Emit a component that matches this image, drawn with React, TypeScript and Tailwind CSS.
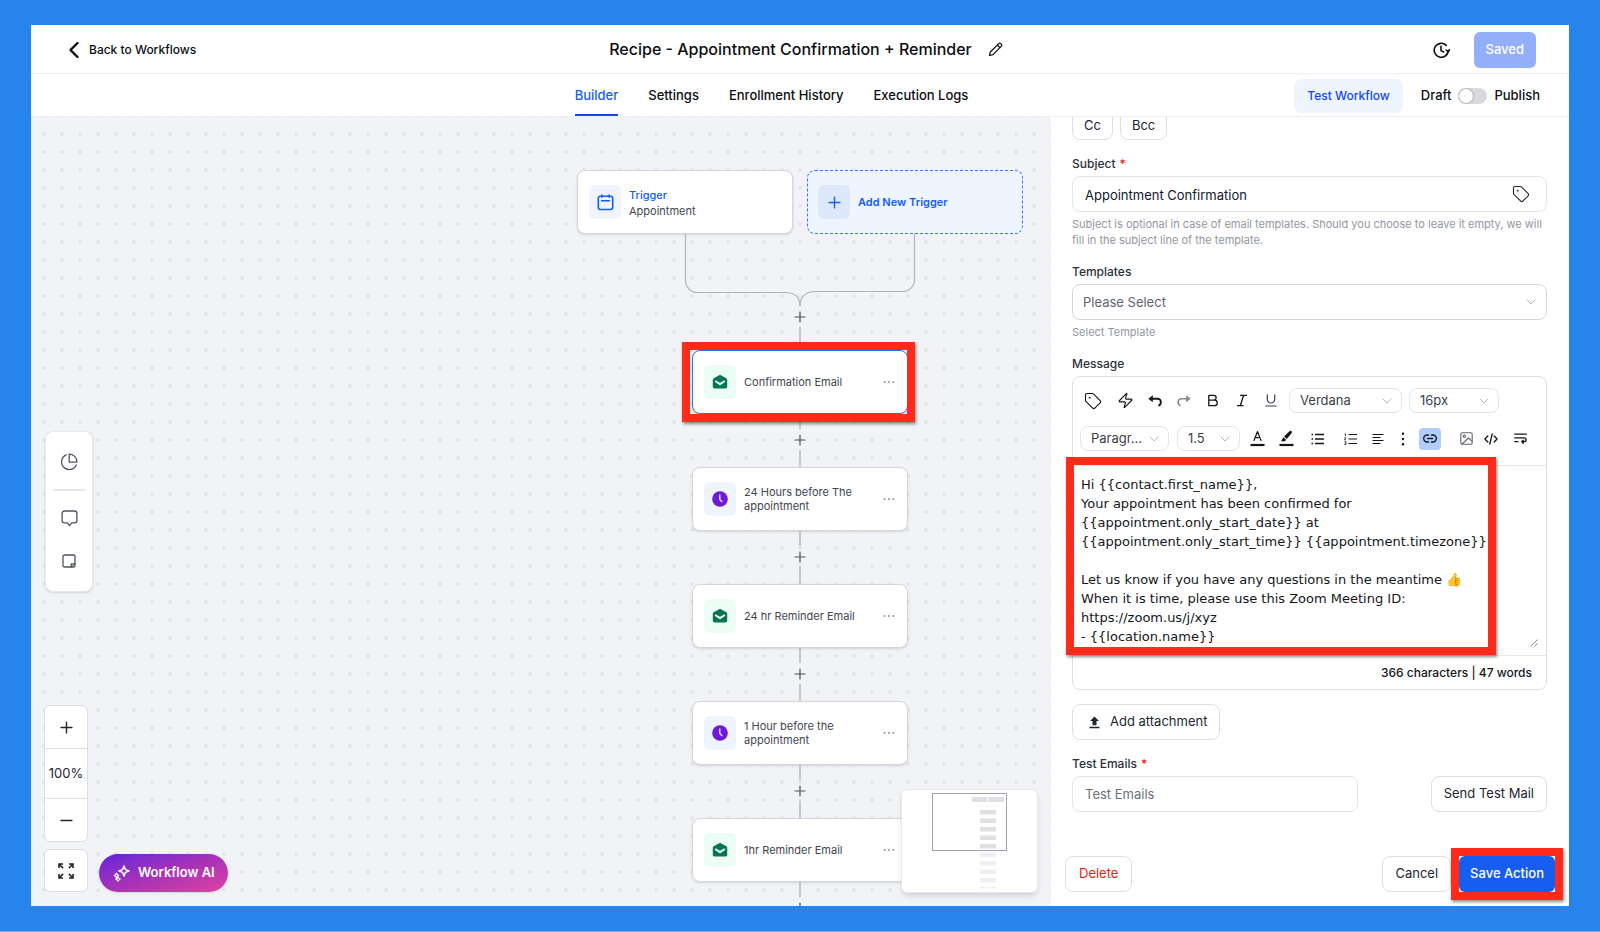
import type { ReactNode } from "react";
import { ChevronDown, Tag, Zap } from "lucide-react";

const stroke = {
  fill: "none",
  stroke: "currentColor",
  strokeLinecap: "round" as const,
  strokeLinejoin: "round" as const,
};

function BackIcon() {
  return (
    <svg width="12" height="18" viewBox="0 0 12 18" {...stroke} strokeWidth="2.4">
      <path d="M9.5 2 2.5 9l7 7" />
    </svg>
  );
}

function PencilIcon() {
  return (
    <svg width="15" height="15" viewBox="0 0 15 15" {...stroke} strokeWidth="1.2">
      <path d="M1.5 13.5 2.3 10 10.8 1.6a1.3 1.3 0 0 1 1.8 0l.8.8a1.3 1.3 0 0 1 0 1.8L5 12.7Z" />
      <path d="m9.4 3 2.6 2.6" />
    </svg>
  );
}

function HistoryIcon() {
  return (
    <svg width="17" height="17" viewBox="0 0 17 17" {...stroke} strokeWidth="1.6">
      <path d="M15.2 8.6a7 7 0 1 1-2-5.2M13.6 12.8a7 7 0 0 0 1-1.6" />
      <path d="M8 4.2v4.4l2.6 1.4" />
      <path d="m13.2 8 2 1.6L16.5 7.7" />
    </svg>
  );
}

function CalendarIcon() {
  return (
    <svg width="17" height="17" viewBox="0 0 17 17" {...stroke} strokeWidth="1.6">
      <rect x="1.3" y="2.3" width="14.4" height="13.2" rx="2.2" />
      <path d="M4.8 1v2.2M12.2 1v2.2M4.5 6.8h8" />
    </svg>
  );
}

function PlusIcon({ size = 12, width = 1.2 }: { size?: number; width?: number }) {
  return (
    <svg width={size} height={size} viewBox="0 0 12 12" {...stroke} strokeWidth={width}>
      <path d="M6 1v10M1 6h10" />
    </svg>
  );
}

function MailIcon() {
  return (
    <svg width="16" height="16" viewBox="0 0 16 16">
      <path d="M8 .8 14.3 4.2c.5.3.9.9.9 1.5v7.1c0 1-.8 1.7-1.7 1.7h-11c-.9 0-1.7-.7-1.7-1.7V5.7c0-.6.4-1.2.9-1.5Z" fill="#067553" />
      <path d="M3.2 7 8 10.2 12.8 7" fill="none" stroke="#ecfdf5" strokeWidth="2" strokeLinejoin="round" />
    </svg>
  );
}

function ClockIcon() {
  return (
    <svg width="16" height="16" viewBox="0 0 16 16">
      <circle cx="8" cy="8" r="7.8" fill="#6d1bd4" />
      <path d="M7.8 4v4.4l2 2" fill="none" stroke="#e9ddfb" strokeWidth="1.4" strokeLinecap="round" />
    </svg>
  );
}

function PieIcon() {
  return (
    <svg width="18" height="18" viewBox="0 0 18 18" {...stroke} strokeWidth="1.3">
      <path d="M6.2 1.8A7.7 7.7 0 1 0 16.3 12" />
      <path d="M9.2 1.1a7.7 7.7 0 0 1 7.7 7.7v.3H9.2Z" />
    </svg>
  );
}

function CommentIcon() {
  return (
    <svg width="17" height="17" viewBox="0 0 17 17" {...stroke} strokeWidth="1.3">
      <path d="M3.4 1h10.2a2.3 2.3 0 0 1 2.3 2.3v7.3a2.3 2.3 0 0 1-2.3 2.3h-2.8L8.5 15.6l-2.300-2.700H3.400a2.300 2.300 0 0 1-2.300-2.300V3.300A2.300 2.300 0 0 1 3.400 1Z" />
    </svg>
  );
}

function NoteIcon() {
  return (
    <svg width="14" height="14" viewBox="0 0 14 14" {...stroke} strokeWidth="1.3">
      <path d="M2.6 1h8.8A1.6 1.6 0 0 1 13 2.600v8.800A1.600 1.600 0 0 1 11.400 13H2.600A1.600 1.600 0 0 1 1 11.400V2.600A1.600 1.600 0 0 1 2.600 1Z" />
      <path d="M9.200 13V9.800H13" />
      <path d="m9.600 12.600 3-2.600" strokeWidth="1" />
    </svg>
  );
}

function FitIcon() {
  return (
    <svg width="16" height="16" viewBox="0 0 16 16" fill="none" stroke="currentColor" strokeWidth="1.6">
      <path d="M1 5V1h4M1.2 1.2l3.900 3.900M11 1h4v4M14.800 1.200l-3.900 3.900M1 11v4h4M1.200 14.800l3.900-3.900M15 11v4h-4M14.800 14.800l-3.900-3.900" />
    </svg>
  );
}

function SparkIcon() {
  return (
    <svg width="17" height="17" viewBox="0 0 17 17" fill="none" stroke="currentColor" strokeWidth="1.5" strokeLinejoin="round">
      <path d="m11 1 1.400 3.600L16 6l-3.600 1.400L11 11 9.600 7.400 6 6l3.600-1.400Z" />
      <path d="m3.400 8.200 1 1.400 1.300.8-1.300.8-1 1.400-.8-1.400-1.300-.8 1.300-.8Z" strokeWidth="1.200" />
      <path d="m5 12 .8 1.200 1.400.9-1.400.9L5 16.200 4.200 15l-1.400-.9 1.400-.9Z" strokeWidth="1.200" />
    </svg>
  );
}

function UndoIcon() {
  return (
    <svg width="14" height="12" viewBox="0 0 14 12" fill="none" stroke="currentColor" strokeWidth="1.9">
      <path d="M2.500 3.800h7a3.400 3.400 0 0 1 3.400 3.400c0 1.500-.8 2.800-2.400 3.600" />
      <path d="M4.800.3v7L.3 3.800Z" fill="currentColor" stroke="none" />
    </svg>
  );
}

function RedoIcon() {
  return (
    <svg width="14" height="12" viewBox="0 0 14 12" fill="none" stroke="currentColor" strokeWidth="1.600">
      <path d="M11.500 3.800h-7a3.400 3.400 0 0 0-3.400 3.400c0 1.500.8 2.800 2.400 3.600" />
      <path d="M9.200.3v7l4.500-3.500Z" fill="currentColor" stroke="none" />
    </svg>
  );
}

function BoldIcon() {
  return (
    <svg width="12" height="13" viewBox="0 0 12 13" {...stroke} strokeWidth="1.300">
      <path d="M1.800 1.300h4.900a2.400 2.400 0 0 1 0 4.900H1.800ZM1.800 6.200h5.700a2.700 2.700 0 0 1 0 5.500H1.800Z" />
    </svg>
  );
}

function ItalicIcon() {
  return (
    <svg width="12" height="13" viewBox="0 0 12 13" {...stroke} strokeWidth="1.300">
      <path d="M4.500 1.300h6M1.500 11.700h5.500M7.600 1.300l-3.300 10.400" />
    </svg>
  );
}

function UnderlineIcon() {
  return (
    <svg width="12" height="13" viewBox="0 0 12 13" {...stroke} strokeWidth="1.200">
      <path d="M2.300.8v4.500a3.700 3.700 0 0 0 7.400 0V.8M.8 12h10.400" />
    </svg>
  );
}

function TextColorIcon() {
  return (
    <svg width="15" height="17" viewBox="0 0 15 17" {...stroke} strokeWidth="1.200">
      <path d="M4 10.500 7.500 1.500l3.500 9M5.200 7.600h4.600" />
      <path d="M.5 15h14" strokeWidth="2.200" strokeLinecap="butt" />
    </svg>
  );
}

function MarkerIcon() {
  return (
    <svg width="15" height="17" viewBox="0 0 15 17">
      <path d="M5 6.500 10.500 1.300c.6-.6 1.400-.6 2 0s.6 1.400 0 2L7.800 9Z" fill="currentColor" />
      <path d="m4.400 7.200 2.800 2.700-1.500 1.300H2Z" fill="currentColor" />
      <path d="M.5 15h14" stroke="currentColor" strokeWidth="2.200" />
    </svg>
  );
}

function BulletsIcon() {
  return (
    <svg width="13" height="12" viewBox="0 0 13 12" stroke="currentColor" strokeWidth="1.300">
      <path d="M4 1.500h9M4 6h9M4 10.500h9" />
      <path d="M.5 1.500h1.600M.5 6h1.600M.5 10.500h1.600" strokeWidth="1.700" />
    </svg>
  );
}

function NumbersIcon() {
  return (
    <svg width="13" height="12" viewBox="0 0 13 12" fill="none" stroke="currentColor" strokeWidth="1.200">
      <path d="M4.500 1.500H13M4.500 6H13M4.500 10.500H13" />
      <path d="M.6.900h.9v2.300M.4 4.700h1.400L.5 6.800h1.500M.4 8.700h1.500v2.800H.4M.8 10.100h1" strokeWidth=".8" />
    </svg>
  );
}

function AlignIcon() {
  return (
    <svg width="12" height="12" viewBox="0 0 12 12" stroke="currentColor" strokeWidth="1">
      <path d="M.5 1.500h11M.5 4.500h8M.5 7.500h11M.5 10.500h8" />
    </svg>
  );
}

function KebabIcon() {
  return (
    <svg width="4" height="14" viewBox="0 0 4 14" fill="currentColor">
      <circle cx="2" cy="1.700" r="1.200" />
      <circle cx="2" cy="7" r="1.200" />
      <circle cx="2" cy="12.300" r="1.200" />
    </svg>
  );
}

function LinkIcon() {
  return (
    <svg width="14" height="9" viewBox="0 0 14 9" {...stroke} strokeWidth="1.400">
      <path d="M5.500 1H4.200a3.500 3.500 0 0 0 0 7h1.300M8.500 1h1.300a3.500 3.500 0 0 1 0 7H8.500M4.500 4.500h5" />
    </svg>
  );
}

function ImageIcon() {
  return (
    <svg width="13" height="13" viewBox="0 0 13 13" {...stroke} strokeWidth="1.100">
      <rect x=".8" y=".8" width="11.400" height="11.400" rx="1.500" />
      <circle cx="4.300" cy="4.300" r="1.200" />
      <path d="m2 12 6.500-6 3.500 3.200" />
    </svg>
  );
}

function CodeIcon() {
  return (
    <svg width="14" height="12" viewBox="0 0 14 12" {...stroke} strokeWidth="1.300">
      <path d="M3.800 3 .9 6l2.900 3M10.200 3l2.900 3-2.900 3M8.200 1 5.800 11" />
    </svg>
  );
}

function WrapIcon() {
  return (
    <svg width="13" height="11" viewBox="0 0 13 11" {...stroke} strokeWidth="1.300">
      <path d="M.8 1.200h11.400M.8 4.900h9.400a1.900 1.900 0 0 1 0 3.800H8M.8 8.700H4M9.300 7.200 7.700 8.700l1.600 1.500" />
    </svg>
  );
}

function UploadIcon() {
  return (
    <svg width="11" height="13" viewBox="0 0 11 13" fill="currentColor">
      <path d="M5.500.5 10 5H7.500v4.300h-4V5H1ZM.5 10.800h10v1.500H.5Z" />
    </svg>
  );
}

function Highlight({ className }: { className: string }) {
  return (
    <div
      aria-hidden="true"
      className={`pointer-events-none absolute border-8 border-[#ff2a1a] shadow-[1px_2px_3px_rgba(0,0,0,0.45)] ${className}`}
    />
  );
}

type StepProps = { title: string; kind: "mail" | "wait"; active?: boolean };

function StepCard({ title, kind, active }: StepProps) {
  return (
    <div
      className={`relative flex h-16 w-[216px] items-center rounded-lg border bg-white pr-3 pl-[11px] shadow-sm ${
        active ? "border-[#2f6fe0]" : "border-[#d5d7dc]"
      }`}
    >
      <span className={`flex h-[34px] w-8 shrink-0 items-center justify-center rounded-md ${kind === "mail" ? "bg-[#ecfdf5]" : "bg-[#eff4ff]"}`}>
        {kind === "mail" ? <MailIcon /> : <ClockIcon />}
      </span>
      <span className="ml-2 w-[120px] text-[11px] leading-[14px] text-[#414651]">{title}</span>
      <button aria-label={`Options for ${title}`} className="ml-auto text-[#8d929c]">
        <svg width="12" height="4" viewBox="0 0 12 4" fill="currentColor">
          <circle cx="1.600" cy="2" r="1" />
          <circle cx="6" cy="2" r="1" />
          <circle cx="10.400" cy="2" r="1" />
        </svg>
      </button>
      {active && <Highlight className="-top-[9px] -right-2 -bottom-[9px] -left-[11px]" />}
    </div>
  );
}

function AddStep() {
  return (
    <button aria-label="Add step" className="flex h-[21px] w-6 items-center justify-center text-[#4b505a]">
      <PlusIcon />
    </button>
  );
}

const steps: StepProps[] = [
  { title: "Confirmation Email", kind: "mail", active: true },
  { title: "24 Hours before The appointment", kind: "wait" },
  { title: "24 hr Reminder Email", kind: "mail" },
  { title: "1 Hour before the appointment", kind: "wait" },
  { title: "1hr Reminder Email", kind: "mail" },
];

function Minimap() {
  return (
    <div className="absolute right-[13px] bottom-[13px] rounded-md border border-[#e7e8eb] bg-white shadow-md">
      <svg width="135" height="102" viewBox="0 0 135 102">
        <rect x="70" y="7" width="15" height="5" fill="#dfe0e4" />
        <rect x="86" y="7" width="16" height="5" fill="#dfe0e4" />
        {Array.from({ length: 9 }, (_, i) => (
          <rect key={i} x="78" y={20 + i * 8.5} width="16" height="4.500" fill={i < 5 ? "#dfe0e4" : "#efeff1"} />
        ))}
        <rect x="78" y="97" width="16" height="1.500" fill="#efeff1" />
        <rect x="30.500" y="3.500" width="74" height="57" fill="none" stroke="#9ca1ab" />
      </svg>
    </div>
  );
}

function Canvas() {
  return (
    <main className="relative min-w-0 flex-1 overflow-hidden bg-[#f2f3f7] bg-[radial-gradient(circle,#e5e6e8_1.5px,transparent_2px)] bg-[size:18px_18px] bg-[position:4px_8px]">
      <div className="absolute top-[53px] left-[546px] flex w-[446px] flex-col items-center">
        <div className="flex w-full justify-between">
          <div className="flex h-16 w-[216px] items-center gap-2 rounded-lg border border-[#d5d7dc] bg-white pl-[11px] shadow-sm">
            <span className="flex h-[34px] w-8 items-center justify-center rounded-md bg-[#eff4ff] text-[#155eef]">
              <CalendarIcon />
            </span>
            <span className="flex flex-col pt-px text-[11px] leading-4">
              <span className="font-medium text-[#155eef]">Trigger</span>
              <span className="text-[#414651]">Appointment</span>
            </span>
          </div>
          <button className="flex h-16 w-[216px] items-center gap-2 rounded-lg border border-dashed border-[#2f7bea] bg-[#eff5ff] pl-[10px] text-[#155eef]">
            <span className="flex h-[34px] w-8 items-center justify-center rounded-md bg-[#dde8fa]">
              <PlusIcon size={13} width={1.3} />
            </span>
            <span className="text-[11px] leading-4 font-semibold">Add New Trigger</span>
          </button>
        </div>
        <svg width="446" height="72" viewBox="0 0 446 72" fill="none" stroke="#b0b3b9" strokeWidth="1.200">
          <path d="M108.500 0v46a12 12 0 0 0 12 12.500H208c10 0 15 5 15 13.500" />
          <path d="M337.500 0v45a12 12 0 0 1-12 12.500H238c-10 0-15 6-15 14.500" />
        </svg>
        <AddStep />
        <span className="h-[23px] w-[2px] bg-[#c6c8cc]" />
        {steps.map((step) => (
          <div key={step.title} className="flex flex-col items-center">
            <StepCard {...step} />
            <span className="h-[15px] w-[2px] bg-[#c6c8cc]" />
            <AddStep />
            <span className="h-[17px] w-[2px] bg-[#c6c8cc]" />
          </div>
        ))}
      </div>

      <div className="absolute bottom-[314px] left-[14px] flex h-[161px] w-12 flex-col items-center rounded-lg border border-[#e7e8eb] bg-white pt-[21px] text-[#4e535e] shadow-sm">
        <button aria-label="Statistics"><PieIcon /></button>
        <span className="mt-[18px] h-[2px] w-8 bg-[#e4e5e9]" />
        <button aria-label="Comments" className="mt-[19px]"><CommentIcon /></button>
        <button aria-label="Notes" className="mt-[27px]"><NoteIcon /></button>
      </div>

      <div className="absolute bottom-[14px] left-[13px] flex items-end gap-[11px]">
        <div className="flex flex-col gap-[7px] text-[#22262f]">
          <div className="flex w-11 flex-col rounded-md border border-[#dcdee2] bg-white">
            <button aria-label="Zoom in" className="flex h-[43px] items-center justify-center border-b border-[#dcdee2]">
              <PlusIcon size={13} width={1.3} />
            </button>
            <span className="flex h-[50px] items-center justify-center border-b border-[#dcdee2] text-[13px]">100%</span>
            <button aria-label="Zoom out" className="flex h-[42px] items-center justify-center">
              <svg width="13" height="3" viewBox="0 0 13 3" stroke="currentColor" strokeWidth="1.500">
                <path d="M.5 1.500h12" />
              </svg>
            </button>
          </div>
          <button aria-label="Fit view" className="flex h-[43px] w-11 items-center justify-center rounded-md border border-[#dcdee2] bg-white">
            <FitIcon />
          </button>
        </div>
        <button className="flex h-[38px] items-center gap-2 rounded-full bg-linear-to-br from-[#6419dc] via-[#a830b8] to-[#e0429f] pr-[13px] pl-[14px] text-[13px] font-semibold text-white shadow-sm">
          <SparkIcon />
          Workflow AI
        </button>
      </div>

      <Minimap />
    </main>
  );
}

const outline = "rounded-lg border border-[#dcdee3] bg-white text-[13px] text-[#22262f]";

function MiniSelect({ label, value, className }: { label: string; value: string; className: string }) {
  return (
    <span className={`relative flex h-[25px] items-center ${className}`}>
      <select
        aria-label={label}
        defaultValue={value}
        className="h-full w-full appearance-none rounded-lg border border-[#e2e4e8] bg-white pl-[10px] text-[13px] text-[#3a3f4a]"
      >
        <option>{value}</option>
      </select>
      <ChevronDown size={16} strokeWidth={1.5} className="pointer-events-none absolute right-[7px] text-[#b4b8c0]" />
    </span>
  );
}

function Tool({ label, className, children }: { label: string; className: string; children: ReactNode }) {
  return (
    <button aria-label={label} className={`flex h-[25px] shrink-0 items-center justify-center ${className}`}>
      {children}
    </button>
  );
}

const message = `Hi {{contact.first_name}},
Your appointment has been confirmed for
{{appointment.only_start_date}} at
{{appointment.only_start_time}} {{appointment.timezone}}

Let us know if you have any questions in the meantime 👍
When it is time, please use this Zoom Meeting ID:
https://zoom.us/j/xyz
- {{location.name}}`;

function Editor() {
  return (
    <div className="relative rounded-lg border border-[#dcdee3] text-[#14161b]">
      <div className="flex flex-col gap-[13px] border-b border-[#e7e8eb] pt-[11px] pb-[14px]">
        <div className="flex items-center gap-1 pl-[3px]">
          <Tool label="Insert tag" className="w-[33px]"><Tag size={18} strokeWidth={1.5} /></Tool>
          <Tool label="Trigger link" className="w-[25px]"><Zap size={17} strokeWidth={1.6} /></Tool>
          <Tool label="Undo" className="w-[25px]"><UndoIcon /></Tool>
          <Tool label="Redo" className="w-[25px] text-[#85888e]"><RedoIcon /></Tool>
          <Tool label="Bold" className="w-[25px]"><BoldIcon /></Tool>
          <Tool label="Italic" className="w-[25px]"><ItalicIcon /></Tool>
          <Tool label="Underline" className="w-[25px] text-[#3a3f4a]"><UnderlineIcon /></Tool>
          <MiniSelect label="Font family" value="Verdana" className="ml-[2px] w-[113px]" />
          <MiniSelect label="Font size" value="16px" className="ml-[3px] w-[90px]" />
        </div>
        <div className="flex items-center pl-[7px]">
          <MiniSelect label="Block style" value="Paragr..." className="w-[89px]" />
          <MiniSelect label="Line height" value="1.5" className="ml-2 w-[63px]" />
          <Tool label="Text color" className="ml-[2px] w-[30px]"><TextColorIcon /></Tool>
          <Tool label="Highlight color" className="w-7"><MarkerIcon /></Tool>
          <Tool label="Bullet list" className="w-[34px]"><BulletsIcon /></Tool>
          <Tool label="Numbered list" className="w-8"><NumbersIcon /></Tool>
          <Tool label="Align" className="w-6"><AlignIcon /></Tool>
          <Tool label="More" className="w-[26px]"><KebabIcon /></Tool>
          <Tool label="Link" className="w-7">
            <span className="flex size-[22px] items-center justify-center rounded-sm bg-[#b2ccff]"><LinkIcon /></span>
          </Tool>
          <Tool label="Image" className="ml-[10px] w-6 text-[#5f636c]"><ImageIcon /></Tool>
          <Tool label="Source code" className="w-[26px]"><CodeIcon /></Tool>
          <Tool label="Wrap text" className="w-8"><WrapIcon /></Tool>
        </div>
      </div>
      <div className="relative">
        <textarea
          id="message"
          defaultValue={message}
          rows={9}
          className="block h-[189px] w-full resize-none overflow-hidden px-2 pt-[9px] font-['DejaVu_Sans',sans-serif] text-[13px] leading-[19px] outline-none"
        />
        <svg width="8" height="8" viewBox="0 0 8 8" stroke="#85888e" className="absolute right-2 bottom-2">
          <path d="M.5 7.500l7-7M4.500 7.500l3-3" />
        </svg>
        <Highlight className="-top-[9px] right-[50px] bottom-0 -left-[7px]" />
      </div>
      <div className="flex h-[34px] items-center justify-end border-t border-[#e7e8eb] pr-[14px] text-[12px] font-medium">
        366 characters | 47 words
      </div>
    </div>
  );
}

const label = "flex h-6 items-center gap-1 text-[12px] font-medium text-[#2c303a]";

function ActionPanel() {
  return (
    <aside className="flex w-[518px] shrink-0 flex-col overflow-hidden bg-white">
      <div className="-mt-[13px] flex flex-col pr-[22px] pl-[21px]">
        <div className="flex gap-[7px]">
          <button className={`${outline} h-9 px-[11px] pt-[6px] leading-4`}>Cc</button>
          <button className={`${outline} h-9 px-[11px] pt-[6px] leading-4`}>Bcc</button>
        </div>

        <label htmlFor="subject" className={`${label} mt-3`}>
          Subject <span className="text-[#e5231b]">*</span>
        </label>
        <div className="flex h-9 items-center rounded-lg border border-[#e2e4e8] pr-4">
          <input id="subject" defaultValue="Appointment Confirmation" className="h-full min-w-0 flex-1 px-3 pt-[2px] text-[13px] text-[#101828] outline-none" />
          <button aria-label="Insert tag" className="text-[#22262f]"><Tag size={18} strokeWidth={1.5} /></button>
        </div>
        <p className="mt-1 text-[11px] leading-4 text-[#9297a1]">
          Subject is optional in case of email templates. Should you choose to leave it empty, we will fill in the subject line of the template.
        </p>

        <label htmlFor="template" className={`${label} mt-3`}>Templates</label>
        <div className="relative flex items-center">
          <select id="template" className="h-9 w-full appearance-none rounded-lg border border-[#d5d7dc] bg-white px-[10px] pt-[2px] text-[13px] text-[#62666f]">
            <option>Please Select</option>
          </select>
          <ChevronDown size={16} strokeWidth={1.5} className="pointer-events-none absolute right-[8px] text-[#b4b8c0]" />
        </div>
        <p className="mt-1 text-[11px] leading-4 text-[#9297a1]">Select Template</p>

        <label htmlFor="message" className={`${label} mt-3`}>Message</label>
        <Editor />

        <button className={`${outline} mt-[14px] flex h-9 items-center gap-[10px] self-start pr-[12px] pl-4`}>
          <UploadIcon />
          Add attachment
        </button>

        <label htmlFor="test-emails" className={`${label} mt-3`}>
          Test Emails <span className="text-[#e5231b]">*</span>
        </label>
        <div className="flex justify-between">
          <input id="test-emails" placeholder="Test Emails" className="h-9 w-[286px] rounded-lg border border-[#e2e4e8] px-3 text-[13px] outline-none placeholder:text-[#6c7079]" />
          <button className={`${outline} h-9 px-3`}>Send Test Mail</button>
        </div>
      </div>

      <div className="mt-auto flex gap-2 px-[14px] pb-[14px]">
        <button className={`${outline} mr-auto h-9 px-[13px]`}>
          <span className="text-[#ee1c12]">Delete</span>
        </button>
        <button className={`${outline} h-9 px-3`}>Cancel</button>
        <div className="relative">
          <button className="h-9 rounded-md bg-[#155eef] px-[11px] text-[13px] font-medium text-white">Save Action</button>
          <Highlight className="-inset-2" />
        </div>
      </div>
    </aside>
  );
}

const tabs = ["Builder", "Settings", "Enrollment History", "Execution Logs"];

export default function App() {
  return (
    <div className="flex h-screen flex-col border-b border-[#68adf4] bg-[#2684ec] px-[31px] pt-[25px] pb-[25px] font-[Inter,sans-serif] text-[#0c0e12]">
      <div className="flex min-h-0 flex-1 flex-col overflow-hidden bg-white">
        <header className="flex h-[49px] shrink-0 items-center border-b border-[#eceef1]">
          <div className="flex flex-1 items-center pt-[2px] pl-[37px]">
            <a href="#workflows" className="flex items-center gap-[9px] text-[12px] font-medium">
              <BackIcon />
              Back to Workflows
            </a>
          </div>
          <div className="ml-2 flex items-center gap-4">
            <h1 className="text-[16px] font-medium">Recipe - Appointment Confirmation + Reminder</h1>
            <button aria-label="Rename"><PencilIcon /></button>
          </div>
          <div className="flex flex-1 items-center justify-end gap-6 pt-[2px] pr-[33px]">
            <button aria-label="Version history"><HistoryIcon /></button>
            <button className="h-9 rounded-md bg-[#94affa] px-3 text-[13px] font-medium text-white">Saved</button>
          </div>
        </header>

        <div className="flex h-[43px] shrink-0 items-center border-b border-[#eceef1] text-[13px] font-medium">
          <div className="flex-1" />
          <nav className="mr-7 flex h-full gap-[30px]">
            {tabs.map((tab, i) => (
              <a
                key={tab}
                href={`#${tab.toLowerCase().replace(" ", "-")}`}
                className={`flex items-center border-b-2 pt-[3px] ${i === 0 ? "border-[#1048e0] text-[#155eef]" : "border-transparent"}`}
              >
                {tab}
              </a>
            ))}
          </nav>
          <div className="flex flex-1 items-center justify-end pt-px pr-[29px]">
            <button className="h-[34px] rounded-lg bg-[#eff5ff] px-[13px] text-[12px] text-[#0f47ea]">Test Workflow</button>
            <span className="ml-[18px]">Draft</span>
            <label className="mx-[7px] flex cursor-pointer items-center">
              <input type="checkbox" role="switch" aria-label="Publish workflow" className="peer sr-only" />
              <span className="flex h-4 w-[29px] items-center rounded-full bg-[#d8d9dd] p-px">
                <span className="size-[14px] rounded-full bg-white shadow-[0_0_2px_rgba(0,0,0,0.5)]" />
              </span>
            </label>
            <span>Publish</span>
          </div>
        </div>

        <div className="flex min-h-0 flex-1">
          <Canvas />
          <ActionPanel />
        </div>
      </div>
    </div>
  );
}
